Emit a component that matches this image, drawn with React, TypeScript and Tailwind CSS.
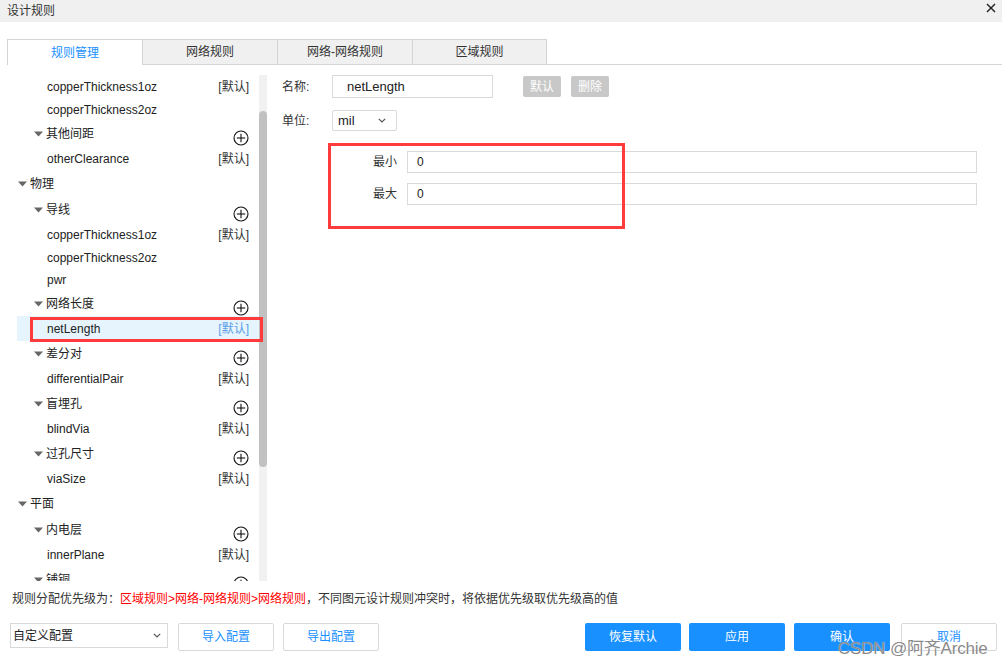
import React from "react";

type Row = {
  label: string;
  kind: "leaf" | "g0" | "g1";
  def?: boolean;
  plus?: boolean;
  h: 22 | 23 | 25 | 26;
  sel?: boolean;
};

const rows: Row[] = [
  { label: "copperThickness1oz", kind: "leaf", def: true, h: 23 },
  { label: "copperThickness2oz", kind: "leaf", h: 23 },
  { label: "其他间距", kind: "g1", plus: true, h: 25 },
  { label: "otherClearance", kind: "leaf", def: true, h: 25 },
  { label: "物理", kind: "g0", h: 26 },
  { label: "导线", kind: "g1", plus: true, h: 26 },
  { label: "copperThickness1oz", kind: "leaf", def: true, h: 23 },
  { label: "copperThickness2oz", kind: "leaf", h: 23 },
  { label: "pwr", kind: "leaf", h: 22 },
  { label: "网络长度", kind: "g1", plus: true, h: 25 },
  { label: "netLength", kind: "leaf", def: true, h: 25, sel: true },
  { label: "差分对", kind: "g1", plus: true, h: 25 },
  { label: "differentialPair", kind: "leaf", def: true, h: 25 },
  { label: "盲埋孔", kind: "g1", plus: true, h: 25 },
  { label: "blindVia", kind: "leaf", def: true, h: 25 },
  { label: "过孔尺寸", kind: "g1", plus: true, h: 25 },
  { label: "viaSize", kind: "leaf", def: true, h: 25 },
  { label: "平面", kind: "g0", h: 26 },
  { label: "内电层", kind: "g1", plus: true, h: 25 },
  { label: "innerPlane", kind: "leaf", def: true, h: 25 },
  { label: "铺铜", kind: "g1", plus: true, h: 25 },
];

const hClass: Record<number, string> = {
  22: "h-[22px]",
  23: "h-[23px]",
  25: "h-[25px]",
  26: "h-[26px]",
};

const padClass: Record<string, string> = {
  leaf: "pl-[30px]",
  g1: "pl-[17px]",
  g0: "pl-[1px]",
};

function Tri() {
  return (
    <svg width="9" height="6" viewBox="0 0 9 6" className="mr-[3px] shrink-0">
      <polygon points="0,0.5 9,0.5 4.5,5.5" fill="#666" />
    </svg>
  );
}

function Plus() {
  return (
    <svg width="16" height="16" viewBox="0 0 16 16" className="translate-y-[4px]">
      <circle cx="8" cy="8" r="7" fill="none" stroke="#111" strokeWidth="1.1" />
      <line x1="3.8" y1="8" x2="12.2" y2="8" stroke="#111" strokeWidth="1.1" />
      <line x1="8" y1="3.8" x2="8" y2="12.2" stroke="#111" strokeWidth="1.1" />
    </svg>
  );
}

function Chevron() {
  return (
    <svg width="8" height="5" viewBox="0 0 8 5">
      <polyline points="0.8,0.8 4,4 7.2,0.8" fill="none" stroke="#555" strokeWidth="1.2" />
    </svg>
  );
}

export default function App() {
  return (
    <div
      className="relative w-[1002px] h-[667px] overflow-hidden bg-white text-[#333] text-[12px]"
      style={{ fontFamily: '"Liberation Sans", "Noto Sans CJK SC", sans-serif' }}
    >
      {/* title bar */}
      <div className="h-[22px] bg-[#f0f0f0] flex items-center justify-between pl-[7px] pr-[6px]">
        <span className="leading-[16px] text-[#333]">设计规则</span>
        <svg width="10" height="10" viewBox="0 0 10 10" className="-translate-y-[3px]">
          <line x1="1" y1="1" x2="9" y2="9" stroke="#222" strokeWidth="1.4" />
          <line x1="9" y1="1" x2="1" y2="9" stroke="#222" strokeWidth="1.4" />
        </svg>
      </div>

      {/* tabs */}
      <div className="mt-[17px] pl-[7px] flex h-[26px]">
        <div className="w-[135px] h-full border-l border-t border-[#d4d4d4] bg-white flex items-center justify-center text-[#1890ff]">
          规则管理
        </div>
        <div className="w-[135px] h-full border-l border-t border-b border-[#d4d4d4] bg-[#f0f0f0] flex items-center justify-center">
          网络规则
        </div>
        <div className="w-[135px] h-full border-l border-t border-b border-[#d4d4d4] bg-[#f0f0f0] flex items-center justify-center">
          网络-网络规则
        </div>
        <div className="w-[135px] h-full border-l border-r border-t border-b border-[#d4d4d4] bg-[#f0f0f0] flex items-center justify-center">
          区域规则
        </div>
        <div className="flex-1 h-full border-b border-[#d4d4d4]" />
      </div>

      {/* main */}
      <div className="flex h-[517px]">
        {/* left tree */}
        <div className="w-[267px] flex pt-[10px]">
          <div className="w-[259px] h-[506px] overflow-hidden">
            {rows.map((r, i) => (
              <div
                key={i}
                className={`ml-[17px] flex items-center justify-between pr-[10px] ${hClass[r.h]} ${padClass[r.kind]} ${
                  r.sel ? "bg-[#e6f4fd]" : ""
                }`}
              >
                <div className="flex items-center leading-[16px] text-[#222]">
                  {r.kind !== "leaf" && <Tri />}
                  <span>{r.label}</span>
                </div>
                {r.def && (
                  <span className={`leading-[16px] ${r.sel ? "text-[#5c9de6]" : "text-[#333]"}`}>[默认]</span>
                )}
                {r.plus && <Plus />}
              </div>
            ))}
          </div>
          <div className="w-[8px] h-[506px] bg-[#f1f1f1] pt-[36px]">
            <div className="w-[8px] h-[356px] rounded-full bg-[#c1c1c1]" />
          </div>
        </div>

        {/* right form */}
        <div className="flex-1 pl-[15px] pt-[10px]">
          <div className="flex items-center h-[23px]">
            <span className="w-[50px] leading-[16px]">名称:</span>
            <div className="w-[161px] h-[23px] border border-[#d9d9d9] flex items-center pl-[14px] text-[13px] text-[#222]">
              netLength
            </div>
            <div className="ml-[30px] w-[38px] h-[21px] bg-[#c8c8c8] rounded-[2px] text-white flex items-center justify-center">
              默认
            </div>
            <div className="ml-[10px] w-[38px] h-[21px] bg-[#c8c8c8] rounded-[2px] text-white flex items-center justify-center">
              删除
            </div>
          </div>
          <div className="flex items-center h-[21px] mt-[12px]">
            <span className="w-[50px] leading-[16px]">单位:</span>
            <div className="w-[65px] h-[21px] border border-[#d9d9d9] rounded-[2px] flex items-center justify-between pl-[5px] pr-[10px] text-[13px] text-[#222]">
              <span>mil</span>
              <Chevron />
            </div>
          </div>
          <div className="mt-[20px] flex flex-col gap-[10px]">
            <div className="flex items-center">
              <span className="w-[115px] text-right leading-[16px]">最小</span>
              <div className="ml-[10px] w-[570px] h-[22px] border border-[#d9d9d9] flex items-center pl-[9px] text-[#222]">
                0
              </div>
            </div>
            <div className="flex items-center">
              <span className="w-[115px] text-right leading-[16px]">最大</span>
              <div className="ml-[10px] w-[570px] h-[22px] border border-[#d9d9d9] flex items-center pl-[9px] text-[#222]">
                0
              </div>
            </div>
          </div>
        </div>
      </div>

      {/* footer */}
      <div className="mt-[8px] h-[18px] pl-[12px] flex items-center leading-[18px]">
        <span>规则分配优先级为：</span>
        <span className="text-[#ff0000]">区域规则&gt;网络-网络规则&gt;网络规则</span>
        <span>，不同图元设计规则冲突时，将依据优先级取优先级高的值</span>
      </div>
      <div className="mt-[15px] flex items-start pl-[10px] pr-[5px]">
        <div className="w-[158px] h-[25px] border border-[#d9d9d9] flex items-center justify-between pl-[2px] pr-[6px] text-[#222]">
          <span>自定义配置</span>
          <Chevron />
        </div>
        <div className="ml-[10px] w-[96px] h-[28px] border border-[#d9d9d9] rounded-[2px] flex items-center justify-center text-[#1890ff]">
          导入配置
        </div>
        <div className="ml-[9px] w-[96px] h-[28px] border border-[#d9d9d9] rounded-[2px] flex items-center justify-center text-[#1890ff]">
          导出配置
        </div>
        <div className="ml-auto w-[96px] h-[28px] bg-[#1890ff] rounded-[2px] flex items-center justify-center text-white">
          恢复默认
        </div>
        <div className="ml-[8px] w-[96px] h-[28px] bg-[#1890ff] rounded-[2px] flex items-center justify-center text-white">
          应用
        </div>
        <div className="ml-[9px] w-[96px] h-[28px] bg-[#1890ff] rounded-[2px] flex items-center justify-center text-white">
          确认
        </div>
        <div className="ml-[11px] w-[96px] h-[28px] border border-[#d9d9d9] rounded-[2px] flex items-center justify-center text-[#1890ff]">
          取消
        </div>
      </div>

      {/* annotation boxes */}
      <div className="absolute left-[30px] top-[317px] w-[233px] h-[25px] border-[3px] border-[#ff3b3b] pointer-events-none" />
      <div className="absolute left-[328px] top-[143px] w-[297px] h-[86px] border-[3px] border-[#ff3b3b] pointer-events-none" />

      {/* watermark */}
      <div
        className="absolute left-[838px] top-[639px] text-[17px] leading-[20px] text-[#8a8a8a] pointer-events-none whitespace-nowrap tracking-[-0.2px]"
        style={{ textShadow: "0 0 1px rgba(255,255,255,0.9)" }}
      >
        CSDN @阿齐Archie
      </div>
    </div>
  );
}
